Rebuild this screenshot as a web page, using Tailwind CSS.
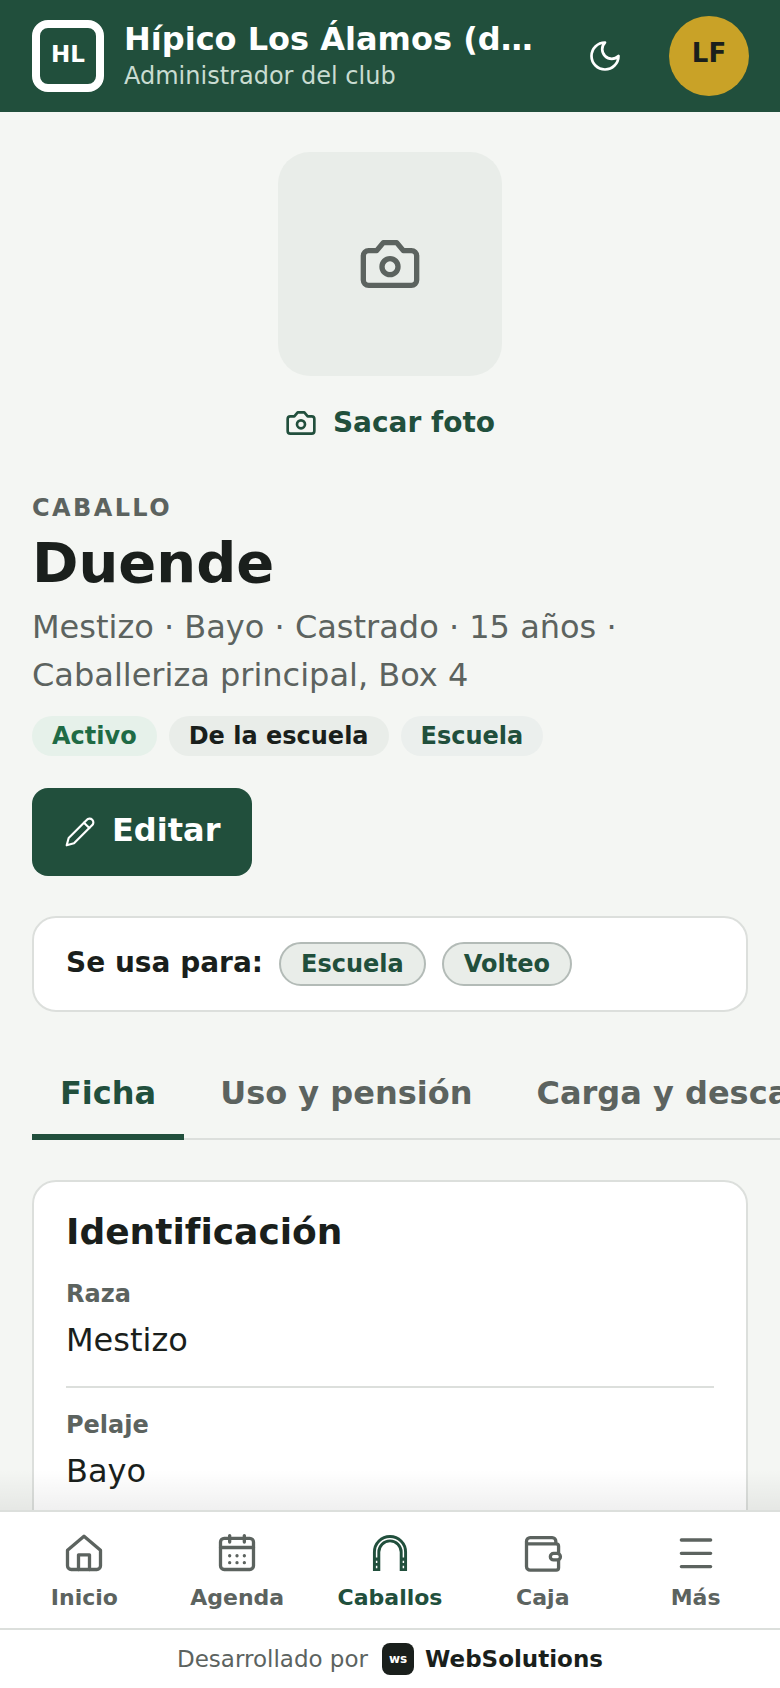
<!DOCTYPE html>
<html lang="es"><head><meta charset="utf-8"><script src="https://cdn.jsdelivr.net/npm/@tailwindcss/browser@4"></script></head>
<body class="m-0 bg-[#f4f6f3] font-['DejaVu_Sans',sans-serif] text-[#1a1f1c]">
<div class="relative flex h-[1688px] w-[780px] flex-col overflow-hidden">
<header class="flex h-[112px] shrink-0 items-center bg-[#214f3c] pl-8 pr-8 text-white">
  <div class="flex h-[72px] w-[72px] shrink-0 items-center justify-center rounded-[16px] border-[8px] border-white pb-1 text-[23px] font-bold">HL</div>
  <div class="ml-5 w-[412px] min-w-0">
    <div class="truncate text-[32px] leading-[38px] font-bold">Hípico Los Álamos (demo)</div>
    <div class="mt-[2px] text-[24px] leading-[32px] text-[#c9dcd1]">Administrador del club</div>
  </div>
  <svg class="ml-auto h-9 w-9 translate-x-[1px]" viewBox="0 0 24 24" fill="none" stroke="currentColor" stroke-width="1.8" stroke-linecap="round" stroke-linejoin="round"><path d="M12 3a6 6 0 0 0 9 9 9 9 0 1 1-9-9Z"/></svg>
  <div class="ml-[46px] flex h-20 w-20 shrink-0 translate-x-[1px] items-center justify-center rounded-full bg-[#c9a227] pb-[6px] text-[26px] font-bold text-[#1a1f1c]">LF</div>
</header>
<main class="flex-1 overflow-hidden px-8 pt-10">
  <div class="flex flex-col items-center">
    <div class="flex h-[224px] w-[224px] items-center justify-center rounded-[32px] bg-[#e9ede9] text-[#5c635f]">
      <svg class="h-16 w-16" viewBox="0 0 24 24" fill="none" stroke="currentColor" stroke-width="2" stroke-linecap="round" stroke-linejoin="round"><path d="M14.5 4h-5L7 7H4a2 2 0 0 0-2 2v9a2 2 0 0 0 2 2h16a2 2 0 0 0 2-2V9a2 2 0 0 0-2-2h-3l-2.5-3z"/><circle cx="12" cy="13" r="3"/></svg>
    </div>
    <div class="mt-[19px] flex h-[56px] items-center gap-4 text-[28px] font-bold text-[#214f3c]">
      <svg class="h-8 w-8" viewBox="0 0 24 24" fill="none" stroke="currentColor" stroke-width="2" stroke-linecap="round" stroke-linejoin="round"><path d="M14.5 4h-5L7 7H4a2 2 0 0 0-2 2v9a2 2 0 0 0 2 2h16a2 2 0 0 0 2-2V9a2 2 0 0 0-2-2h-3l-2.5-3z"/><circle cx="12" cy="13" r="3"/></svg>
      <span>Sacar foto</span>
    </div>
  </div>
  <div class="mt-[41px] text-[24px] leading-[32px] font-bold tracking-[0.1em] text-[#5c635f]">CABALLO</div>
  <h1 class="mt-[7px] text-[56px] leading-[64px] font-bold">Duende</h1>
  <p class="mt-[8px] w-[640px] text-[32px] leading-[48px] text-[#5c635f]">Mestizo · Bayo · Castrado · 15 años · Caballeriza principal, Box 4</p>
  <div class="mt-[17px] flex gap-3 text-[24px] font-bold">
    <span class="flex h-10 items-center rounded-full bg-[#e6f1ea] px-5 text-[#1f6b45]">Activo</span>
    <span class="flex h-10 items-center rounded-full bg-[#e9ede9] px-5 text-[#1a1f1c]">De la escuela</span>
    <span class="flex h-10 items-center rounded-full bg-[#ebefed] px-5 text-[#214f3c]">Escuela</span>
  </div>
  <button class="mt-8 flex h-[88px] items-center gap-4 rounded-[16px] bg-[#214f3c] px-8 text-[32px] font-bold text-white">
    <svg class="h-8 w-8" viewBox="0 0 24 24" fill="none" stroke="currentColor" stroke-width="1.6" stroke-linecap="round" stroke-linejoin="round"><path d="M17 3a2.85 2.83 0 1 1 4 4L7.5 20.5 2 22l1.5-5.5Z"/><path d="m15 5 4 4"/></svg>
    <span class="pb-1">Editar</span>
  </button>
  <div class="mt-10 flex h-[96px] items-center gap-[16px] rounded-[24px] border-2 border-[#dcdfdc] bg-white px-8">
    <span class="pb-[2px] text-[28px] font-bold">Se usa para:</span>
    <span class="flex h-11 items-center rounded-full border-2 border-[#b3bbb7] bg-[#e9ede9] px-5 text-[24px] font-bold text-[#214f3c]">Escuela</span>
    <span class="flex h-11 items-center rounded-full border-2 border-[#b3bbb7] bg-[#e9ede9] px-5 text-[24px] font-bold text-[#214f3c]">Volteo</span>
  </div>
  <nav class="mt-10 -mr-8 flex h-[88px] gap-2 overflow-hidden text-[32px] font-bold text-[#5c635f] shadow-[inset_0_-2px_0_#dcdfdc]">
    <div class="flex h-[88px] shrink-0 items-center border-b-[6px] border-[#214f3c] px-7 text-[#214f3c]">Ficha</div>
    <div class="flex h-[88px] shrink-0 items-center border-b-[6px] border-transparent px-7">Uso y pensión</div>
    <div class="flex h-[88px] shrink-0 items-center border-b-[6px] border-transparent px-7">Carga y descanso</div>
  </nav>
  <section class="mt-10 rounded-[24px] border-2 border-[#dcdfdc] bg-white px-8 pt-[28px] pb-20">
    <h2 class="text-[36px] leading-[44px] font-bold">Identificación</h2>
    <div class="mt-[24px] border-b-2 border-[#dcdfdc] pb-[22px]">
      <div class="text-[24px] leading-[32px] font-bold text-[#5c635f]">Raza</div>
      <div class="mt-[6px] text-[32px] leading-[48px]">Mestizo</div>
    </div>
    <div class="mt-[21px]">
      <div class="text-[24px] leading-[32px] font-bold text-[#5c635f]">Pelaje</div>
      <div class="mt-[6px] text-[32px] leading-[48px]">Bayo</div>
    </div>
  </section>
</main>
<div class="pointer-events-none absolute right-0 bottom-[178px] left-0 h-10 bg-gradient-to-b from-transparent to-black/[0.06]"></div>
<footer class="absolute right-0 bottom-0 left-0 bg-white">
  <div class="flex h-[118px] border-t-2 border-[#dcdfdc] px-2 text-[22px] font-bold text-[#5c635f]">
    <div class="flex flex-1 flex-col items-center pt-[19px]">
      <svg class="h-11 w-11" viewBox="0 0 24 24" fill="none" stroke="currentColor" stroke-width="1.8" stroke-linecap="round" stroke-linejoin="round"><path d="M3 10.5 12 2.8l9 7.7V19a2 2 0 0 1-2 2H5a2 2 0 0 1-2-2z"/><path d="M9 21v-8h6v8"/></svg>
      <span class="mt-[7px] leading-[32px]">Inicio</span>
    </div>
    <div class="flex flex-1 flex-col items-center pt-[19px]">
      <svg class="h-11 w-11" viewBox="0 0 24 24" fill="none" stroke="currentColor" stroke-width="1.8" stroke-linecap="round" stroke-linejoin="round"><rect x="3" y="4" width="18" height="17" rx="2"/><path d="M8 2.5V6M16 2.5V6M3 9h18"/><path d="M8 13.5h.01M12 13.5h.01M16 13.5h.01M8 17.3h.01M12 17.3h.01M16 17.3h.01"/></svg>
      <span class="mt-[7px] leading-[32px]">Agenda</span>
    </div>
    <div class="flex flex-1 flex-col items-center pt-[19px] text-[#214f3c]">
      <svg class="h-11 w-11" viewBox="0 0 24 24" fill="none" stroke="currentColor" stroke-linecap="butt"><path stroke-width="4" d="M4.7 21.8V11.5a7.3 7.3 0 0 1 14.6 0v10.3"/><path stroke="#fff" stroke-width="0.8" d="M4.7 14.5v-3a7.3 7.3 0 0 1 14.6 0v3M4.7 16.2v1.3M4.7 19v1.3M19.3 16.2v1.3M19.3 19v1.3"/></svg>
      <span class="mt-[7px] leading-[32px]">Caballos</span>
    </div>
    <div class="flex flex-1 flex-col items-center pt-[19px]">
      <svg class="h-11 w-11" viewBox="0 0 24 24" fill="none" stroke="currentColor" stroke-width="1.8" stroke-linecap="round" stroke-linejoin="round"><path d="M3 7V5.6a2 2 0 0 1 2-2h12a2 2 0 0 1 2 2V7h.2a1.3 1.3 0 0 1 1.3 1.3V20a1.3 1.3 0 0 1-1.3 1.3H5a2 2 0 0 1-2-2V7h16"/><rect x="16" y="12.2" width="5.5" height="3.6" rx="1.8" fill="#fff"/></svg>
      <span class="mt-[7px] leading-[32px]">Caja</span>
    </div>
    <div class="flex flex-1 flex-col items-center pt-[19px]">
      <svg class="h-11 w-11" viewBox="0 0 24 24" fill="none" stroke="currentColor" stroke-width="1.8" stroke-linecap="round"><path d="M4 4.9h16M4 12.2h16M4 19.4h16"/></svg>
      <span class="mt-[7px] leading-[32px]">Más</span>
    </div>
  </div>
  <div class="flex h-[60px] items-center justify-center border-t-2 border-[#dcdfdc] text-[23px] text-[#5c635f]">
    <span>Desarrollado por</span>
    <span class="ml-[14px] flex h-8 w-8 items-center justify-center rounded-lg bg-[#1a1f1c] text-[12px] font-bold text-white">ws</span>
    <span class="ml-[11px] font-bold text-[#1a1f1c]">WebSolutions</span>
  </div>
</footer>
</div>
</body></html>
